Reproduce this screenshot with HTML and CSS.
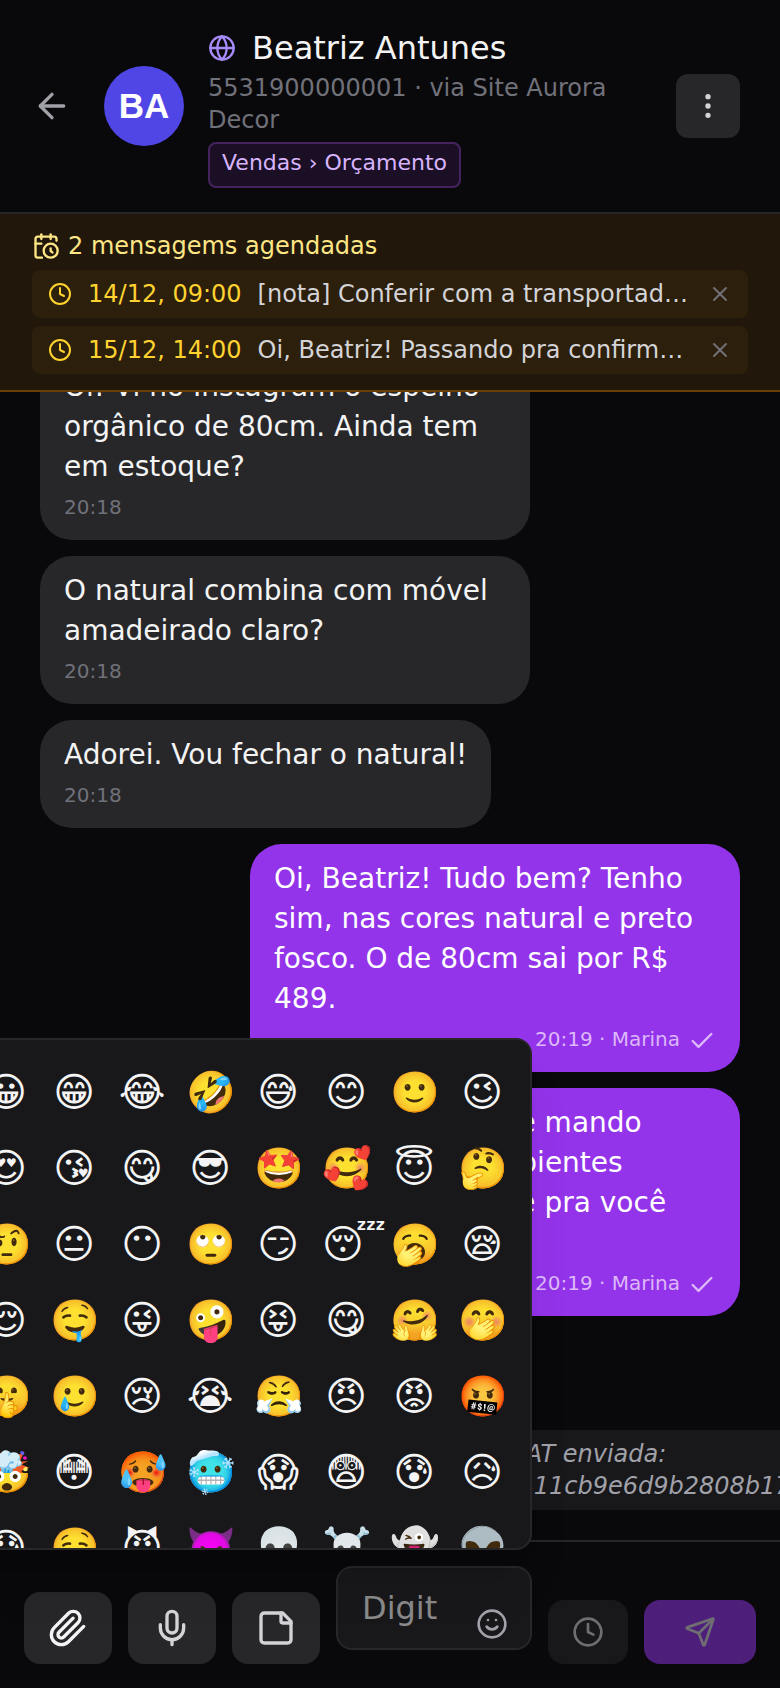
FILE: index.html
```html
<!DOCTYPE html>
<html lang="pt-BR">
<head>
  <meta charset="UTF-8" />
  <meta name="viewport" content="width=device-width, initial-scale=1" />
  <title>Beatriz Antunes</title>
  <link rel="stylesheet" href="styles.css">
</head>
<body>
  <div class="chat">
    <header class="chat-header">
      <button type="button" class="back-btn" aria-label="Voltar">
        <svg class="icon icon-40" viewBox="0 0 24 24"><path d="m12 19-7-7 7-7"/><path d="M19 12H5"/></svg>
      </button>
      <div class="avatar">BA</div>
      <div class="contact">
        <h1>
          <svg class="icon icon-28 globe" viewBox="0 0 24 24"><circle cx="12" cy="12" r="10"/><path d="M12 2a14.5 14.5 0 0 0 0 20 14.5 14.5 0 0 0 0-20"/><path d="M2 12h20"/></svg>
          <span>Beatriz Antunes</span>
        </h1>
        <p>5531900000001 · via Site Aurora Decor</p>
        <span class="tag">Vendas › Orçamento</span>
      </div>
      <button type="button" class="menu-btn" aria-label="Mais opções">
        <svg class="icon icon-32" viewBox="0 0 24 24"><circle cx="12" cy="12" r="1"/><circle cx="12" cy="5" r="1"/><circle cx="12" cy="19" r="1"/></svg>
      </button>
    </header>

    <section class="scheduled">
      <h2>
        <svg class="icon icon-28" viewBox="0 0 24 24"><path d="M21 7.5V6a2 2 0 0 0-2-2H5a2 2 0 0 0-2 2v14a2 2 0 0 0 2 2h3.5"/><path d="M16 2v4"/><path d="M8 2v4"/><path d="M3 10h5"/><path d="M17.5 17.5 16 16.3V14"/><circle cx="16" cy="16" r="6"/></svg>
        2 mensagems agendadas
      </h2>
      <ul>
        <li>
          <svg class="icon icon-24" viewBox="0 0 24 24"><circle cx="12" cy="12" r="10"/><path d="M12 6v6l4 2"/></svg>
          <time>14/12, 09:00</time>
          <span class="preview">[nota] Conferir com a transportadora o prazo</span>
          <button type="button" aria-label="Cancelar mensagem">
            <svg class="icon icon-24" viewBox="0 0 24 24"><path d="M18 6 6 18"/><path d="m6 6 12 12"/></svg>
          </button>
        </li>
        <li>
          <svg class="icon icon-24" viewBox="0 0 24 24"><circle cx="12" cy="12" r="10"/><path d="M12 6v6l4 2"/></svg>
          <time>15/12, 14:00</time>
          <span class="preview">Oi, Beatriz! Passando pra confirmar a entrega</span>
          <button type="button" aria-label="Cancelar mensagem">
            <svg class="icon icon-24" viewBox="0 0 24 24"><path d="M18 6 6 18"/><path d="m6 6 12 12"/></svg>
          </button>
        </li>
      </ul>
    </section>

    <main class="messages">
      <div class="bubble received">
        <p>Oi! Vi no Instagram o espelho orgânico de 80cm. Ainda tem em estoque?</p>
        <div class="meta">20:18</div>
      </div>
      <div class="bubble received">
        <p>O natural combina com móvel amadeirado claro?</p>
        <div class="meta">20:18</div>
      </div>
      <div class="bubble received">
        <p>Adorei. Vou fechar o natural!</p>
        <div class="meta">20:18</div>
      </div>
      <div class="bubble sent">
        <p>Oi, Beatriz! Tudo bem? Tenho sim, nas cores natural e preto fosco. O de 80cm sai por R$ 489.</p>
        <div class="meta">20:19 · Marina <svg class="icon icon-28" viewBox="0 0 24 24"><path d="M20 6 9 17l-5-5"/></svg></div>
      </div>
      <div class="bubble sent">
        <p>Claro! Separei e te mando fotos dele em ambientes prontos ainda hoje pra você escolher.</p>
        <div class="meta">20:19 · Marina <svg class="icon icon-28" viewBox="0 0 24 24"><path d="M20 6 9 17l-5-5"/></svg></div>
      </div>
      <div class="system-note">
        Pesquisa de satisfação pós-venda CSAT enviada:<br>
        https://auroradecor.com.br/csat/7w2411cb9e6d9b2808b17f3a
      </div>
    </main>

    <footer class="composer">
      <button type="button" class="tool-btn attach" aria-label="Anexar arquivo">
        <svg class="icon icon-40" viewBox="0 0 24 24"><path d="m21.44 11.05-9.19 9.19a6 6 0 0 1-8.49-8.49l8.57-8.57A4 4 0 1 1 18 8.84l-8.59 8.57a2 2 0 0 1-2.83-2.83l8.49-8.48"/></svg>
      </button>
      <button type="button" class="tool-btn" aria-label="Gravar áudio">
        <svg class="icon icon-40" viewBox="0 0 24 24"><path d="M12 2a3 3 0 0 0-3 3v7a3 3 0 0 0 6 0V5a3 3 0 0 0-3-3Z"/><path d="M19 10v2a7 7 0 0 1-14 0v-2"/><path d="M12 19v3"/></svg>
      </button>
      <button type="button" class="tool-btn" aria-label="Figurinhas">
        <svg class="icon icon-40" viewBox="0 0 24 24"><path d="M16 3H5a2 2 0 0 0-2 2v14a2 2 0 0 0 2 2h14a2 2 0 0 0 2-2V8Z"/><path d="M15 3v5a1 1 0 0 0 1 1h5"/></svg>
      </button>
      <div class="input-wrap">
        <div class="emoji-picker" id="emojiPicker"></div>
        <textarea rows="1" placeholder="Digite uma mensagem..." aria-label="Mensagem"></textarea>
        <button type="button" class="emoji-btn" aria-label="Emojis">
          <svg class="icon icon-32" viewBox="0 0 24 24"><circle cx="12" cy="12" r="10"/><path d="M8 14s1.500 2 4 2 4-2 4-2"/><path d="M9 9h.01"/><path d="M15 9h.01"/></svg>
        </button>
      </div>
      <button type="button" class="schedule-btn" aria-label="Agendar" disabled>
        <svg class="icon icon-32" viewBox="0 0 24 24"><circle cx="12" cy="12" r="10"/><path d="M12 6v6l4 2"/></svg>
      </button>
      <button type="button" class="send-btn" aria-label="Enviar" disabled>
        <svg class="icon icon-32" viewBox="0 0 24 24"><path d="M14.536 21.686a.5.5 0 0 0 .937-.024l6.500-19a.496.496 0 0 0-.635-.635l-19 6.500a.5.5 0 0 0-.024.937l7.930 3.180a2 2 0 0 1 1.112 1.110z"/><path d="m21.854 2.147-10.940 10.939"/></svg>
      </button>
    </footer>
  </div>

<script>
  const emojis = [
    '😀', '😁', '😂', '🤣', '😅', '😊', '🙂', '😉',
    '😍', '😘', '😋', '😎', '🤩', '🥰', '😇', '🤔',
    '🤨', '😐', '😶', '🙄', '😏', '😴', '🥱', '😪',
    '😌', '🤤', '😜', '🤪', '😝', '😋', '🤗', '🤭',
    '🤫', '🥲', '😢', '😭', '😤', '😠', '😡', '🤬',
    '🤯', '😳', '🥵', '🥶', '😱', '😨', '😰', '😥',
    '😓', '🤤', '😈', '👿', '💀', '☠️', '👻', '👽'
  ];
  const picker = document.getElementById('emojiPicker');
  const textarea = document.querySelector('.input-wrap textarea');

  emojis.forEach(emoji => {
    const btn = document.createElement('button');
    btn.type = 'button';
    btn.textContent = emoji;
    btn.addEventListener('click', () => {
      textarea.value += emoji;
    });
    picker.appendChild(btn);
  });
</script>
</body>
</html>
```
FILE: styles.css
```css
* {
  box-sizing: border-box;
  margin: 0;
  padding: 0;
}
body {
  font-family: "DejaVu Sans", sans-serif;
  font-size: 28px;
  line-height: 40px;
  background: #09090b;
  color: #f4f4f5;
  overflow: hidden;
}
button {
  display: flex;
  align-items: center;
  justify-content: center;
  flex-shrink: 0;
  border: none;
  background: none;
  color: inherit;
  font: inherit;
  cursor: pointer;
}
.chat {
  display: flex;
  flex-direction: column;
  height: 100vh;
}

/* icons */
.icon {
  flex-shrink: 0;
  fill: none;
  stroke: currentColor;
  stroke-width: 2;
  stroke-linecap: round;
  stroke-linejoin: round;
}
.icon-24 { width: 24px; height: 24px; }
.icon-28 { width: 28px; height: 28px; }
.icon-32 { width: 32px; height: 32px; }
.icon-40 { width: 40px; height: 40px; }

/* header */
.chat-header {
  display: flex;
  align-items: center;
  gap: 24px;
  padding: 24px 40px 24px 32px;
  border-bottom: 2px solid #27272a;
}
.back-btn {
  margin-right: 8px;
  color: #a1a1aa;
}
.avatar {
  display: flex;
  align-items: center;
  justify-content: center;
  flex-shrink: 0;
  width: 80px;
  height: 80px;
  border-radius: 50%;
  background: #4f46e5;
  color: #fff;
  font-family: "Liberation Sans", sans-serif;
  font-size: 35px;
  font-weight: bold;
}
.contact {
  flex: 1;
  min-width: 0;
}
.contact h1 {
  display: flex;
  align-items: center;
  gap: 16px;
  font-size: 32px;
  font-weight: normal;
  line-height: 48px;
}
.globe {
  color: #a78bfa;
}
.contact p {
  font-size: 24px;
  line-height: 32px;
  color: #71717a;
}
.tag {
  display: block;
  width: fit-content;
  margin-top: 6px;
  padding: 3px 12px 7px;
  border: 2px solid #46235f;
  border-radius: 8px;
  background: #1a0f24;
  color: #d8b4fe;
  font-size: 22px;
  line-height: 32px;
}
.menu-btn {
  width: 64px;
  height: 64px;
  border-radius: 12px;
  background: #27272a;
  color: #d4d4d8;
}

/* scheduled messages */
.scheduled {
  padding: 16px 32px;
  border-bottom: 2px solid #6c3f05;
  background: #21180b;
  font-size: 24px;
  line-height: 32px;
}
.scheduled h2 {
  display: flex;
  align-items: center;
  gap: 8px;
  margin-bottom: 8px;
  color: #fee685;
  font-size: 24px;
  font-weight: normal;
}
.scheduled ul {
  display: flex;
  flex-direction: column;
  gap: 8px;
  list-style: none;
}
.scheduled li {
  display: flex;
  align-items: center;
  gap: 16px;
  padding: 8px 16px;
  border-radius: 8px;
  background: #2c1f0b;
  color: #ffd230;
}
.scheduled .preview {
  flex: 1;
  min-width: 0;
  overflow: hidden;
  text-overflow: ellipsis;
  white-space: nowrap;
  color: #d4d4d8;
}
.scheduled li button {
  color: #71717a;
}

/* messages */
.messages {
  display: flex;
  flex: 1;
  flex-direction: column;
  justify-content: flex-end;
  gap: 16px;
  min-height: 0;
  padding: 0 40px 30px;
  overflow: hidden;
}
.bubble {
  flex-shrink: 0;
  max-width: 70%;
  padding: 15px 24px 16px;
  border-radius: 32px;
}
.received {
  align-self: flex-start;
  background: #27272a;
}
.sent {
  align-self: flex-end;
  background: #9333ea;
  color: #fff;
}
.meta {
  display: flex;
  align-items: center;
  gap: 8px;
  margin-top: 3px;
  color: #71717a;
  font-size: 20px;
  line-height: 34px;
}
.meta .icon {
  margin-top: 4px;
}
.sent .meta {
  justify-content: flex-end;
  color: #dcb8f9;
}
.system-note {
  flex-shrink: 0;
  align-self: flex-start;
  margin-top: 98px;
  padding: 8px 40px;
  background: #18181b;
  color: #a1a1aa;
  font-size: 24px;
  font-style: italic;
  line-height: 32px;
  white-space: nowrap;
}

/* composer */
.composer {
  display: flex;
  align-items: flex-end;
  gap: 16px;
  padding: 24px;
  border-top: 2px solid #27272a;
}
.tool-btn {
  width: 88px;
  height: 72px;
  border-radius: 16px;
  background: #27272a;
  color: #d4d4d8;
}
.attach {
  color: #f4f4f5;
}
.input-wrap {
  position: relative;
  flex: 1;
  min-width: 0;
  padding-bottom: 14px;
}
.input-wrap textarea {
  display: block;
  width: 100%;
  height: 84px;
  padding: 16px 80px 16px 24px;
  border: 2px solid #27272a;
  border-radius: 16px;
  background: #18181b;
  color: #f4f4f5;
  font: inherit;
  font-size: 32px;
  line-height: 48px;
  overflow: hidden;
  resize: none;
  outline: none;
}
.input-wrap textarea::placeholder {
  color: #8a8a8a;
}
.emoji-btn {
  position: absolute;
  right: 24px;
  bottom: 24px;
  color: #a1a1aa;
}
.emoji-picker {
  position: absolute;
  right: 0;
  bottom: calc(100% + 16px);
  z-index: 10;
  display: grid;
  grid-template-columns: repeat(8, 1fr);
  grid-auto-rows: 72px;
  gap: 4px;
  width: 576px;
  height: 512px;
  padding: 16px;
  border: 2px solid #27272a;
  border-radius: 16px;
  background: #18181b;
  box-shadow: 0 40px 50px -10px rgba(0,0,0,0.1), 0 16px 20px -12px rgba(0,0,0,0.1);
  overflow: hidden;
}
.emoji-picker button {
  display: block;
  min-width: 0;
  padding: 8px;
  font-size: 40px;
  text-align: center;
}
.schedule-btn, .send-btn {
  width: 80px;
  height: 64px;
  border-radius: 16px;
  background: #27272a;
  color: #d4d4d8;
  opacity: 0.5;
  cursor: not-allowed;
}
.send-btn {
  width: 112px;
  background: #9333ea;
}
```
